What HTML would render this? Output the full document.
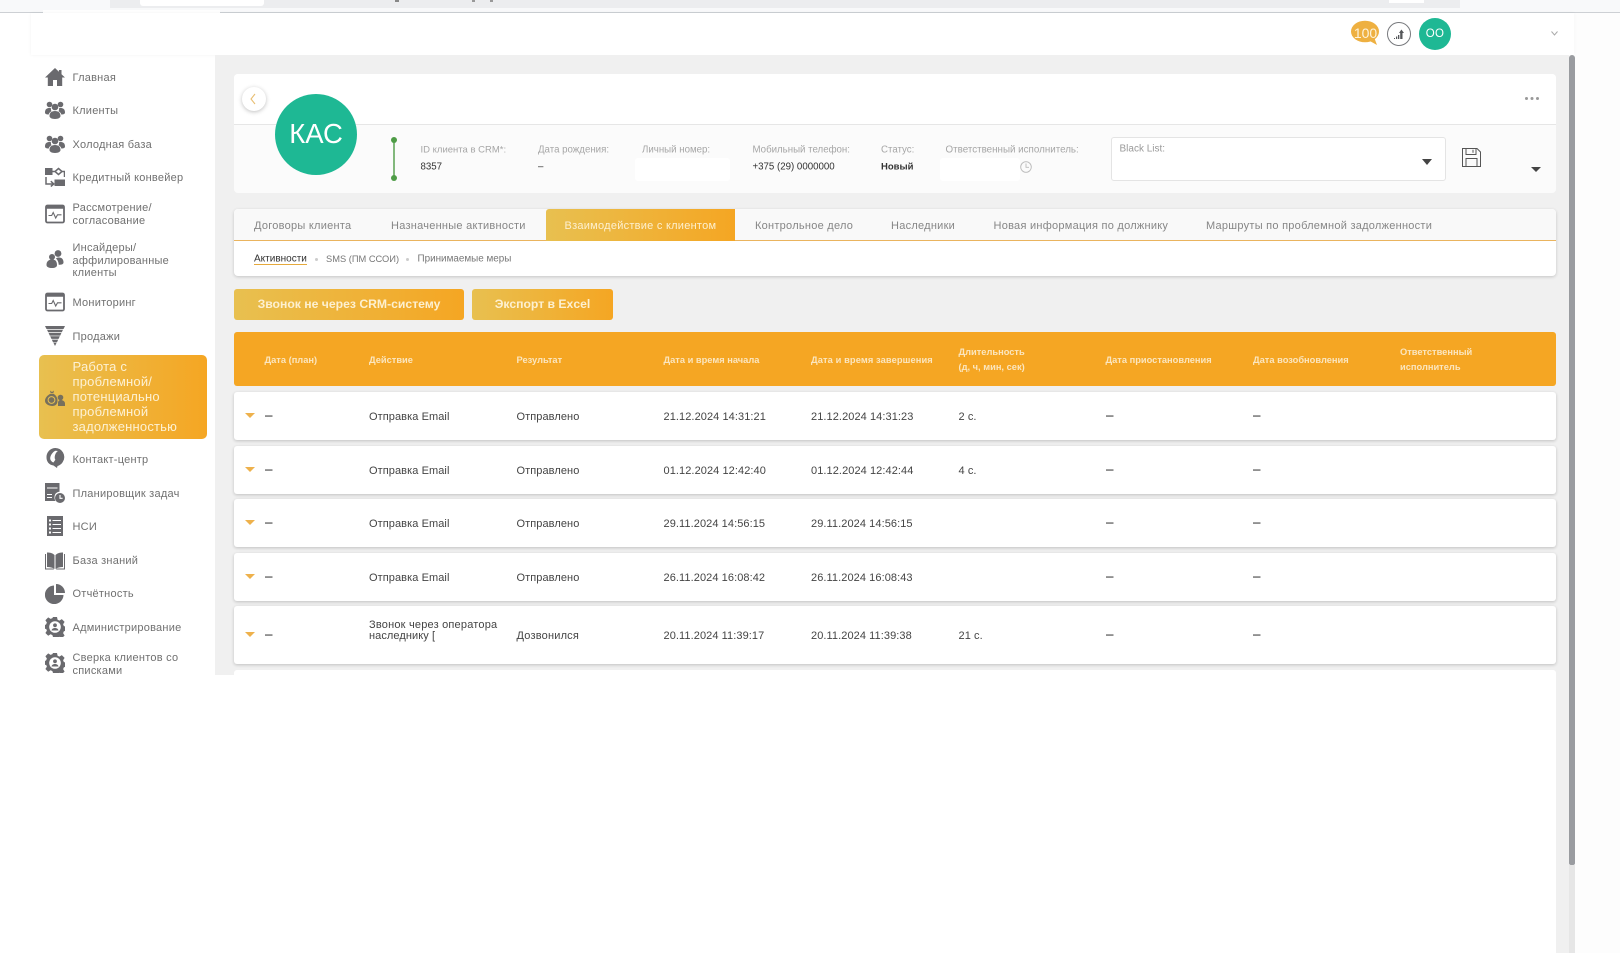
<!DOCTYPE html>
<html lang="ru"><head><meta charset="utf-8"><title>CRM</title>
<style>
html,body{margin:0;padding:0;width:1620px;height:953px;overflow:hidden;background:#fff;font-family:"Liberation Sans",sans-serif}
#p{position:relative;width:1620px;height:953px;overflow:hidden;background:#fff}
#p div,#p svg{position:absolute}
.t{white-space:nowrap;transform:translateY(calc(-50% + 1px))}
.d{transform:translateY(calc(-50% - 1px))!important;font-size:13.500px!important;color:#222!important}
.nav{left:72.500px;font-size:11px;color:#707070;letter-spacing:.24px}
.ic{left:45px;width:20px;height:20px;fill:#6a6a6e}
.lab{font-size:9.700px;color:#a6a6a6;top:149px}
.val{font-size:9.700px;color:#333;top:166px}
.tab{font-size:11px;color:#868686;top:225px;letter-spacing:.26px}
.row{left:234px;width:1322px;background:#fff;border-radius:3px;box-shadow:0 1px 3px rgba(0,0,0,.2)}
.c{font-size:11px;color:#444;letter-spacing:.08px}
.th{font-size:9.300px;font-weight:bold;color:#fbe6bf;transform:translateY(-50%)}
.ar{left:245px;width:0;height:0;border-left:5.500px solid transparent;border-right:5.500px solid transparent;border-top:5px solid #eeb14c}
.btn{top:289px;height:31px;border-radius:3px;background:linear-gradient(90deg,#e8c050,#f5a623);color:#fdf0d0;font-size:12.200px;font-weight:bold;line-height:31px;text-align:center;white-space:nowrap}
</style></head><body><div id="p">

<!-- browser strip -->
<div style="left:0;top:0;width:1620px;height:12px;background:#f8f9fa"></div>
<div style="left:110px;top:0;width:1350px;height:8px;background:#ecedef"></div>
<div style="left:140px;top:0;width:124px;height:6px;background:#fff;border-radius:0 0 3px 3px"></div>
<div style="left:1389px;top:0;width:35px;height:3px;background:#fff"></div>
<div style="left:395px;top:0;width:4px;height:2px;background:#888"></div>
<div style="left:472px;top:0;width:3px;height:2px;background:#999"></div>
<div style="left:490px;top:0;width:3px;height:2px;background:#999"></div>
<div style="left:0;top:12px;width:1620px;height:1px;background:#cdd0d4"></div>
<div style="left:43px;top:10px;width:177px;height:3px;background:#fff"></div>

<!-- right margin -->
<div style="left:1575px;top:13px;width:45px;height:940px;background:#fdfdfd"></div>

<!-- header -->
<div style="left:31px;top:13px;width:1543px;height:42px;background:#fff;box-shadow:0 0 3px rgba(0,0,0,.06)"></div>

<!-- badge -->
<svg style="left:1350px;top:20px" width="30" height="26" viewBox="0 0 30 26"><ellipse cx="15" cy="11.500" rx="14" ry="10.800" fill="#eeb041"/><path d="M18 20l9 5-3-8z" fill="#eeb041"/></svg>
<div class="t" style="left:1351.500px;top:31.500px;width:28px;text-align:center;font-size:14px;color:#fdf3dc">100</div>
<svg style="left:1386px;top:21px" width="26" height="26" viewBox="0 0 26 26"><circle cx="13" cy="13" r="11.500" fill="#fff" stroke="#77797d" stroke-width="1"/><path d="M8 18h1v-1H8zM10 18h1.200v-2.500H10zM12 18h1.300v-4H12zM14.200 18h2.300v-6h1.500l-2.600-3.500-2.400 3.500h1.200z" fill="#55575a"/></svg>
<div style="left:1419px;top:18px;width:32px;height:32px;border-radius:50%;background:#1eb894"></div>
<div class="t" style="left:1419px;top:32.500px;width:32px;text-align:center;font-size:11.500px;color:#fff;letter-spacing:.3px">ОО</div>
<svg style="left:1551px;top:31px" width="7" height="5" viewBox="0 0 7 5"><path d="M.5.500 3.500 4 6.500.500" fill="none" stroke="#aaa" stroke-width="1"/></svg>

<!-- content bg -->
<div style="left:215px;top:55px;width:1354px;height:620px;background:#f0f0f0"></div>
<div style="left:1556px;top:675px;width:13px;height:278px;background:#f0f0f0"></div>
<div style="left:1569px;top:55px;width:6px;height:810px;background:#9a9ca0;border-radius:3px 3px 2px 2px"></div>
<div style="left:1569px;top:865px;width:6px;height:88px;background:#e6e6e6"></div>
<div style="left:1554px;top:724px;width:2px;height:9px;background:#ededed"></div>
<div style="left:1554px;top:800px;width:2px;height:7px;background:#ededed"></div>
<div style="left:1554px;top:868px;width:2px;height:7px;background:#ededed"></div>
<div style="left:1554px;top:936px;width:2px;height:7px;background:#ededed"></div>

<!-- sidebar -->
<svg class="ic" style="top:67px" viewBox="0 0 20 20"><path d="M10 1 0 10.500h2.800V19h5.200v-6h4v6h5.200v-8.500H20l-3.500-3.300V3h-2.600v1.700z"/></svg>
<div class="t nav" style="top:77px">Главная</div>
<svg class="ic" style="top:100px" viewBox="0 0 20 20"><circle cx="4.500" cy="4.500" r="2.800"/><circle cx="15.500" cy="4.500" r="2.800"/><circle cx="10" cy="7" r="3.300"/><path d="M0 12.500C0 9 2 8 4.500 8c.8 0 1.200.1 1.700.4-.5 1-.2 2 .3 2.800C5 12 4 13 3.700 14.500 1.500 14.500 0 14 0 12.500zM20 12.500C20 9 18 8 15.500 8c-.8 0-1.200.1-1.700.4.500 1 .2 2-.3 2.800 1.500.8 2.500 1.800 2.800 3.300 2.200 0 3.700-.5 3.700-2zM10 11c3.500 0 5.500 1.800 5.500 5 0 1.600-2 3-5.500 3s-5.500-1.400-5.500-3c0-3.200 2-5 5.500-5z"/></svg>
<div class="t nav" style="top:110px">Клиенты</div>
<svg class="ic" style="top:134px" viewBox="0 0 20 20"><circle cx="4.500" cy="4.500" r="2.800"/><circle cx="15.500" cy="4.500" r="2.800"/><circle cx="10" cy="7" r="3.300"/><path d="M0 12.500C0 9 2 8 4.500 8c.8 0 1.200.1 1.700.4-.5 1-.2 2 .3 2.800C5 12 4 13 3.700 14.500 1.500 14.500 0 14 0 12.500zM20 12.500C20 9 18 8 15.500 8c-.8 0-1.200.1-1.700.4.500 1 .2 2-.3 2.800 1.500.8 2.500 1.800 2.800 3.300 2.200 0 3.700-.5 3.700-2zM10 11c3.500 0 5.500 1.800 5.500 5 0 1.600-2 3-5.500 3s-5.500-1.400-5.500-3c0-3.200 2-5 5.500-5z"/></svg>
<div class="t nav" style="top:144px">Холодная база</div>
<svg class="ic" style="top:167px" viewBox="0 0 20 20"><path d="M0 1h7.500v7H0zM9.500 12.500H20V19H9.500z"/><path d="M13.500 1.500 17 4.500l-3.500 3-3.500-3zM7 4.500h3M17 4.500h2.500v5.500M1 10v7h7M5.800 14.200 8.800 17l-3 2.500" fill="none" stroke="#6a6a6e" stroke-width="1.500"/></svg>
<div class="t nav" style="top:177px">Кредитный конвейер</div>
<svg class="ic" style="top:204px" viewBox="0 0 20 20"><rect x="1" y="1.500" width="18" height="17" rx="1.500" fill="none" stroke="#6a6a6e" stroke-width="1.800"/><path d="M1 2h18v2.800H1z"/><path d="M3.500 11.500h3.200l1.500-3 2.500 5.500 1.800-3.200h4" fill="none" stroke="#6a6a6e" stroke-width="1.100"/></svg>
<div class="t nav" style="top:207px">Рассмотрение/</div>
<div class="t nav" style="top:220px">согласование</div>
<svg class="ic" style="top:249px" viewBox="0 0 20 20"><circle cx="13" cy="4.500" r="3.400"/><circle cx="7" cy="8" r="3"/><path d="M1.500 16c0-3.500 2-5.500 5.500-5.500 1.300 0 2.400.3 3.200.8 1 .7 1.800 2.500 1.800 4.700 0 2-2 3-5 3s-5.500-1-5.500-3zM11 9.500c.7-.7 1.800-1 3-1 3 0 4.500 2 4.500 5 0 1.500-1.500 2.300-4.800 2.300 0-2.500-1-4.800-2.700-6.300z"/></svg>
<div class="t nav" style="top:247px">Инсайдеры/</div>
<div class="t nav" style="top:260px">аффилированные</div>
<div class="t nav" style="top:272px">клиенты</div>
<svg class="ic" style="top:292px" viewBox="0 0 20 20"><rect x="1" y="1.500" width="18" height="17" rx="1.500" fill="none" stroke="#6a6a6e" stroke-width="1.800"/><path d="M1 2h18v2.800H1z"/><path d="M3.500 11.500h3.200l1.500-3 2.500 5.500 1.800-3.200h4" fill="none" stroke="#6a6a6e" stroke-width="1.100"/></svg>
<div class="t nav" style="top:302px">Мониторинг</div>
<svg class="ic" style="top:326px" viewBox="0 0 20 20"><path d="M0 0h20l-1.500 3h-17zM2 3.700h16l-1.200 2.600H3.200zM3.600 7h12.800l-1.200 2.600H4.800zM5.200 10.300h9.600l-1.200 2.600H6.400zM6.800 13.600h6.400l-1.200 2.600H8zM8.400 16.800h3.200L10 20z"/></svg>
<div class="t nav" style="top:336px">Продажи</div>

<div style="left:39px;top:355px;width:168px;height:84px;border-radius:5px;background:linear-gradient(90deg,#e8c050,#f5a623)"></div>
<svg class="ic" style="top:388px;fill:#77705c" viewBox="0 0 20 20"><path d="M5 2.500 7 4l2-1.500-.6 2.500H5.600zM5.500 5.800h3c3 1.800 4 4.500 4 7 0 3.400-2 5.200-5.200 5.200S0 16.200 0 12.800c0-2.500 2-5.300 5.500-7z"/><circle cx="6.500" cy="12" r="3.400" fill="none" stroke="#e8c050" stroke-width="1"/><circle cx="15.500" cy="9.500" r="2.800"/><path d="M13 18v-3c0-1.800 1-3 2.500-3s4.500.8 4.500 3.500V18z"/></svg>
<div class="nav" style="left:72.500px;top:358.500px;font-size:13px;line-height:15.100px;color:#fdf1d3;letter-spacing:.2px;white-space:nowrap">Работа с<br>проблемной/<br>потенциально<br>проблемной<br>задолженностью</div>

<svg class="ic" style="top:448px" viewBox="0 0 20 20"><path d="M10 0a9 9 0 0 1 8 13.500c-1.200 2.500-3.200 3.800-5.500 4.500l-.5 2-3.500-2.500C4 17 1.500 13.500 1.500 9.500A9 9 0 0 1 10 0z"/><path d="M13 3c-1.200.8-2.400 2-3 4.200-.5 2-.4 3.600.4 4.500l-2 2.800C7 14 4.700 12.300 5.300 9.300 5.900 6.200 8.400 3.500 10.500 2.700z" fill="#fff"/></svg>
<div class="t nav" style="top:459px">Контакт-центр</div>
<svg class="ic" style="top:483px" viewBox="0 0 20 20"><path d="M0 0h14.500v8.800C11.500 9 9.700 11 9.500 14 9.400 15.800 9.900 17 10.500 18H0z"/><path d="M2 4.500h10.500v1H2zM2 11h5v1H2zM2 14h5v1H2z" fill="#fff"/><circle cx="15" cy="15" r="5"/><path d="M15 12v3.300h2.600" fill="none" stroke="#fff" stroke-width="1.100"/></svg>
<div class="t nav" style="top:493px">Планировщик задач</div>
<svg class="ic" style="top:516px" viewBox="0 0 20 20"><path d="M2 0h16v20H2z"/><path d="M4 3.500h2v2H4zM7.500 4h8.500v1H7.500zM4 7.500h2v2H4zM7.500 8h8.500v1H7.500zM4 11.500h2v2H4zM7.500 12h8.500v1H7.500zM4 15.500h2v2H4zM7.500 16h8.500v1H7.500z" fill="#fff"/></svg>
<div class="t nav" style="top:526px">НСИ</div>
<svg class="ic" style="top:551px" viewBox="0 0 20 20"><path d="M2 1.500c3 0 5.500.5 7.500 2.500v14c-2-1.500-4.500-2-7.500-2zM18 1.500c-3 0-5.500.5-7.500 2.500v14c2-1.500 4.500-2 7.500-2z"/><path d="M.5 3v15h8.300M19.500 3v15h-8.300" fill="none" stroke="#6a6a6e" stroke-width="1"/></svg>
<div class="t nav" style="top:560px">База знаний</div>
<svg class="ic" style="top:584px" viewBox="0 0 20 20"><path d="M9 1.500V11h9.500A9.300 9.300 0 1 1 9 1.500z"/><path d="M11 0a9 9 0 0 1 9 9h-9z"/></svg>
<div class="t nav" style="top:593px">Отчётность</div>
<svg class="ic" style="top:617px" viewBox="0 0 20 20"><path d="M8 0h4l.6 2.800 1.800.8 2.400-1.500 2.800 2.800-1.500 2.400.8 1.800 2.100.6v4l-2.100.6-.8 1.800 1.500 2.400-2.800 2.800-2.400-1.500-1.800.8L12 20H8l-.6-1.900-1.800-.8-2.400 1.500-2.800-2.800 1.500-2.400-.8-1.800L0 12V8l1.100-.6.800-1.800L.4 3.200 3.200.4l2.400 1.500 1.800-.8z"/><circle cx="10" cy="10" r="5.800" fill="#fff"/><circle cx="10" cy="8.300" r="1.900"/><path d="M6.500 13.500c.4-1.800 1.800-2.500 3.500-2.500s3.100.7 3.500 2.500z"/></svg>
<div class="t nav" style="top:627px">Администрирование</div>
<svg class="ic" style="top:653px" viewBox="0 0 20 20"><path d="M8 0h4l.6 2.800 1.800.8 2.400-1.500 2.800 2.800-1.500 2.400.8 1.800 2.100.6v4l-2.100.6-.8 1.800 1.500 2.400-2.800 2.800-2.400-1.500-1.800.8L12 20H8l-.6-1.900-1.800-.8-2.400 1.500-2.800-2.800 1.500-2.400-.8-1.800L0 12V8l1.100-.6.800-1.800L.4 3.200 3.200.4l2.400 1.500 1.800-.8z"/><circle cx="10" cy="10" r="5.800" fill="#fff"/><circle cx="10" cy="8.300" r="1.900"/><path d="M6.500 13.500c.4-1.800 1.800-2.500 3.500-2.500s3.100.7 3.500 2.500z"/></svg>
<div class="t nav" style="top:657px">Сверка клиентов со</div>
<div class="t nav" style="top:670px">списками</div>

<!-- client card -->
<div style="left:234px;top:74px;width:1322px;height:119px;border-radius:4px;background:#fbfbfb;overflow:hidden">
  <div style="left:0;top:0;width:1322px;height:50px;background:#fff;border-bottom:1px solid #e6e6e6"></div>
</div>
<div style="left:242px;top:87px;width:24px;height:24px;border-radius:50%;background:#fff;box-shadow:0 1px 4px rgba(0,0,0,.25)"></div>
<svg style="left:249px;top:93px" width="8" height="12" viewBox="0 0 8 12"><path d="M6 1 2 6l4 5" fill="none" stroke="#e8be72" stroke-width="1.100"/></svg>
<div style="left:275px;top:94px;width:82px;height:81px;border-radius:50%;background:#1eb894"></div>
<div class="t" style="left:275px;top:133px;width:82px;text-align:center;font-size:27.500px;color:#fff">КАС</div>
<svg style="left:390px;top:136px" width="8" height="46" viewBox="0 0 8 46"><path d="M4 4v38" stroke="#4e9c46" stroke-width="1.400"/><circle cx="4" cy="4" r="3" fill="#4e9c46"/><circle cx="4" cy="42" r="3" fill="#4e9c46"/></svg>

<div class="t lab" style="left:420.500px;font-size:9.500px">ID клиента в CRM*:</div><div class="t val" style="left:420.500px">8357</div>
<div class="t lab" style="left:538px">Дата рождения:</div><div class="t val" style="left:538px">–</div>
<div class="t lab" style="left:642px">Личный номер:</div>
<div style="left:635px;top:158px;width:95px;height:23px;background:#fff;border-radius:3px"></div>
<div class="t lab" style="left:752.500px">Мобильный телефон:</div><div class="t val" style="left:752.500px">+375 (29) 0000000</div>
<div class="t lab" style="left:881px">Статус:</div><div class="t val" style="left:881px;font-weight:bold;font-size:9.500px">Новый</div>
<div class="t lab" style="left:945.500px;font-size:9.800px">Ответственный исполнитель:</div>
<div style="left:939.500px;top:158px;width:80px;height:23px;background:#fff;border-radius:3px"></div>
<svg style="left:1020px;top:161px" width="12" height="12" viewBox="0 0 12 12"><circle cx="6" cy="6" r="5.300" fill="none" stroke="#bbb" stroke-width=".9"/><path d="M6 2.500V6.300h3" fill="none" stroke="#bbb" stroke-width=".9"/></svg>

<div style="left:1111px;top:137px;width:333px;height:42px;background:#fff;border:1px solid #e4e4e4;border-radius:3px"></div>
<div class="t" style="left:1119.500px;top:148px;font-size:10px;color:#9a9a9a">Black List:</div>
<div style="left:1422px;top:158.500px;width:0;height:0;border-left:5.500px solid transparent;border-right:5.500px solid transparent;border-top:6px solid #444"></div>
<svg style="left:1462px;top:148px" width="19" height="19" viewBox="0 0 19 19"><path d="M.5.500h14.500l3.500 3.500v14.500H.5z" fill="none" stroke="#555" stroke-width="1"/><path d="M4 .500v6h10v-6M11 1.800v3M4 18.500v-8h11v8" fill="none" stroke="#555" stroke-width="1"/></svg>
<div style="left:1531px;top:167px;width:0;height:0;border-left:5px solid transparent;border-right:5px solid transparent;border-top:5px solid #444"></div>
<svg style="left:1524px;top:96px" width="16" height="5" viewBox="0 0 16 5"><circle cx="2.500" cy="2.500" r="1.500" fill="#999"/><circle cx="8" cy="2.500" r="1.500" fill="#999"/><circle cx="13.500" cy="2.500" r="1.500" fill="#999"/></svg>

<!-- tabs -->
<div style="left:234px;top:209px;width:1322px;height:67px;background:#fff;border-radius:4px;box-shadow:0 1px 3px rgba(0,0,0,.18)"></div>
<div style="left:234px;top:209px;width:1322px;height:31px;background:#f9f9f9;border-radius:4px 4px 0 0"></div>
<div style="left:234px;top:240px;width:1322px;height:1px;background:#eab45e"></div>
<div style="left:546px;top:209px;width:189px;height:32px;background:linear-gradient(90deg,#e8c050,#f5a623);border-radius:3px 0 0 0"></div>
<div class="t tab" style="left:254px">Договоры клиента</div>
<div class="t tab" style="left:391px">Назначенные активности</div>
<div class="t tab" style="left:564.500px;color:#fdf0d0">Взаимодействие с клиентом</div>
<div class="t tab" style="left:755px">Контрольное дело</div>
<div class="t tab" style="left:891px">Наследники</div>
<div class="t tab" style="left:993.500px">Новая информация по должнику</div>
<div class="t tab" style="left:1206px">Маршруты по проблемной задолженности</div>

<div class="t" style="left:254px;top:257.500px;font-size:10px;color:#333">Активности</div>
<div style="left:254px;top:264px;width:53px;height:1px;background:#e5a93c"></div>
<div style="left:315px;top:257.500px;width:3px;height:3px;border-radius:50%;background:#ccc"></div>
<div class="t" style="left:326px;top:257.500px;font-size:9.300px;color:#777">SMS (ПМ ССОИ)</div>
<div style="left:406px;top:257.500px;width:3px;height:3px;border-radius:50%;background:#ccc"></div>
<div class="t" style="left:417.500px;top:257.500px;font-size:9.900px;color:#777">Принимаемые меры</div>

<div class="btn" style="left:234px;width:230px">Звонок не через CRM-систему</div>
<div class="btn" style="left:472px;width:141px">Экспорт в Excel</div>

<!-- table header -->
<div style="left:234px;top:332px;width:1322px;height:54px;background:#f5a623;border-radius:3px"></div>
<div class="t th" style="left:264.500px;top:359.500px">Дата (план)</div>
<div class="t th" style="left:369px;top:359.500px">Действие</div>
<div class="t th" style="left:516.500px;top:359.500px">Результат</div>
<div class="t th" style="left:663.500px;top:359.500px">Дата и время начала</div>
<div class="t th" style="left:811px;top:359.500px;letter-spacing:.1px">Дата и время завершения</div>
<div class="t th" style="left:958.500px;top:351.500px">Длительность</div>
<div class="t th" style="left:958.500px;top:366.500px">(д, ч, мин, сек)</div>
<div class="t th" style="left:1105.500px;top:359.500px">Дата приостановления</div>
<div class="t th" style="left:1253px;top:359.500px">Дата возобновления</div>
<div class="t th" style="left:1400px;top:351.500px">Ответственный</div>
<div class="t th" style="left:1400px;top:366.500px">исполнитель</div>

<!-- rows -->
<div class="row" style="top:392px;height:48px"></div>
<div class="row" style="top:446px;height:48px"></div>
<div class="row" style="top:499px;height:48px"></div>
<div class="row" style="top:553px;height:48px"></div>
<div class="row" style="top:606px;height:58px"></div>
<div style="left:234px;top:670px;width:1322px;height:283px;background:#fff;border-radius:3px 3px 0 0"></div>

<div class="ar" style="top:413px"></div><div class="t c d" style="left:265px;top:416px">–</div>
<div class="t c" style="left:369px;top:416px">Отправка Email</div><div class="t c" style="left:516.500px;top:416px">Отправлено</div>
<div class="t c" style="left:663.500px;top:416px">21.12.2024 14:31:21</div><div class="t c" style="left:811px;top:416px">21.12.2024 14:31:23</div>
<div class="t c" style="left:958.500px;top:416px">2 с.</div>
<div class="t c d" style="left:1106px;top:416px">–</div><div class="t c d" style="left:1253px;top:416px">–</div>

<div class="ar" style="top:467px"></div><div class="t c d" style="left:265px;top:470px">–</div>
<div class="t c" style="left:369px;top:470px">Отправка Email</div><div class="t c" style="left:516.500px;top:470px">Отправлено</div>
<div class="t c" style="left:663.500px;top:470px">01.12.2024 12:42:40</div><div class="t c" style="left:811px;top:470px">01.12.2024 12:42:44</div>
<div class="t c" style="left:958.500px;top:470px">4 с.</div>
<div class="t c d" style="left:1106px;top:470px">–</div><div class="t c d" style="left:1253px;top:470px">–</div>

<div class="ar" style="top:520px"></div><div class="t c d" style="left:265px;top:523px">–</div>
<div class="t c" style="left:369px;top:523px">Отправка Email</div><div class="t c" style="left:516.500px;top:523px">Отправлено</div>
<div class="t c" style="left:663.500px;top:523px">29.11.2024 14:56:15</div><div class="t c" style="left:811px;top:523px">29.11.2024 14:56:15</div>
<div class="t c d" style="left:1106px;top:523px">–</div><div class="t c d" style="left:1253px;top:523px">–</div>

<div class="ar" style="top:574px"></div><div class="t c d" style="left:265px;top:577px">–</div>
<div class="t c" style="left:369px;top:577px">Отправка Email</div><div class="t c" style="left:516.500px;top:577px">Отправлено</div>
<div class="t c" style="left:663.500px;top:577px">26.11.2024 16:08:42</div><div class="t c" style="left:811px;top:577px">26.11.2024 16:08:43</div>
<div class="t c d" style="left:1106px;top:577px">–</div><div class="t c d" style="left:1253px;top:577px">–</div>

<div class="ar" style="top:632px"></div><div class="t c d" style="left:265px;top:635px">–</div>
<div class="t c" style="left:369px;top:624px;letter-spacing:.2px">Звонок через оператора</div>
<div class="t c" style="left:369px;top:635px">наследнику [</div>
<div class="t c" style="left:516.500px;top:635px;letter-spacing:.2px">Дозвонился</div>
<div class="t c" style="left:663.500px;top:635px">20.11.2024 11:39:17</div><div class="t c" style="left:811px;top:635px">20.11.2024 11:39:38</div>
<div class="t c" style="left:958.500px;top:635px">21 с.</div>
<div class="t c d" style="left:1106px;top:635px">–</div><div class="t c d" style="left:1253px;top:635px">–</div>

</div></body></html>
